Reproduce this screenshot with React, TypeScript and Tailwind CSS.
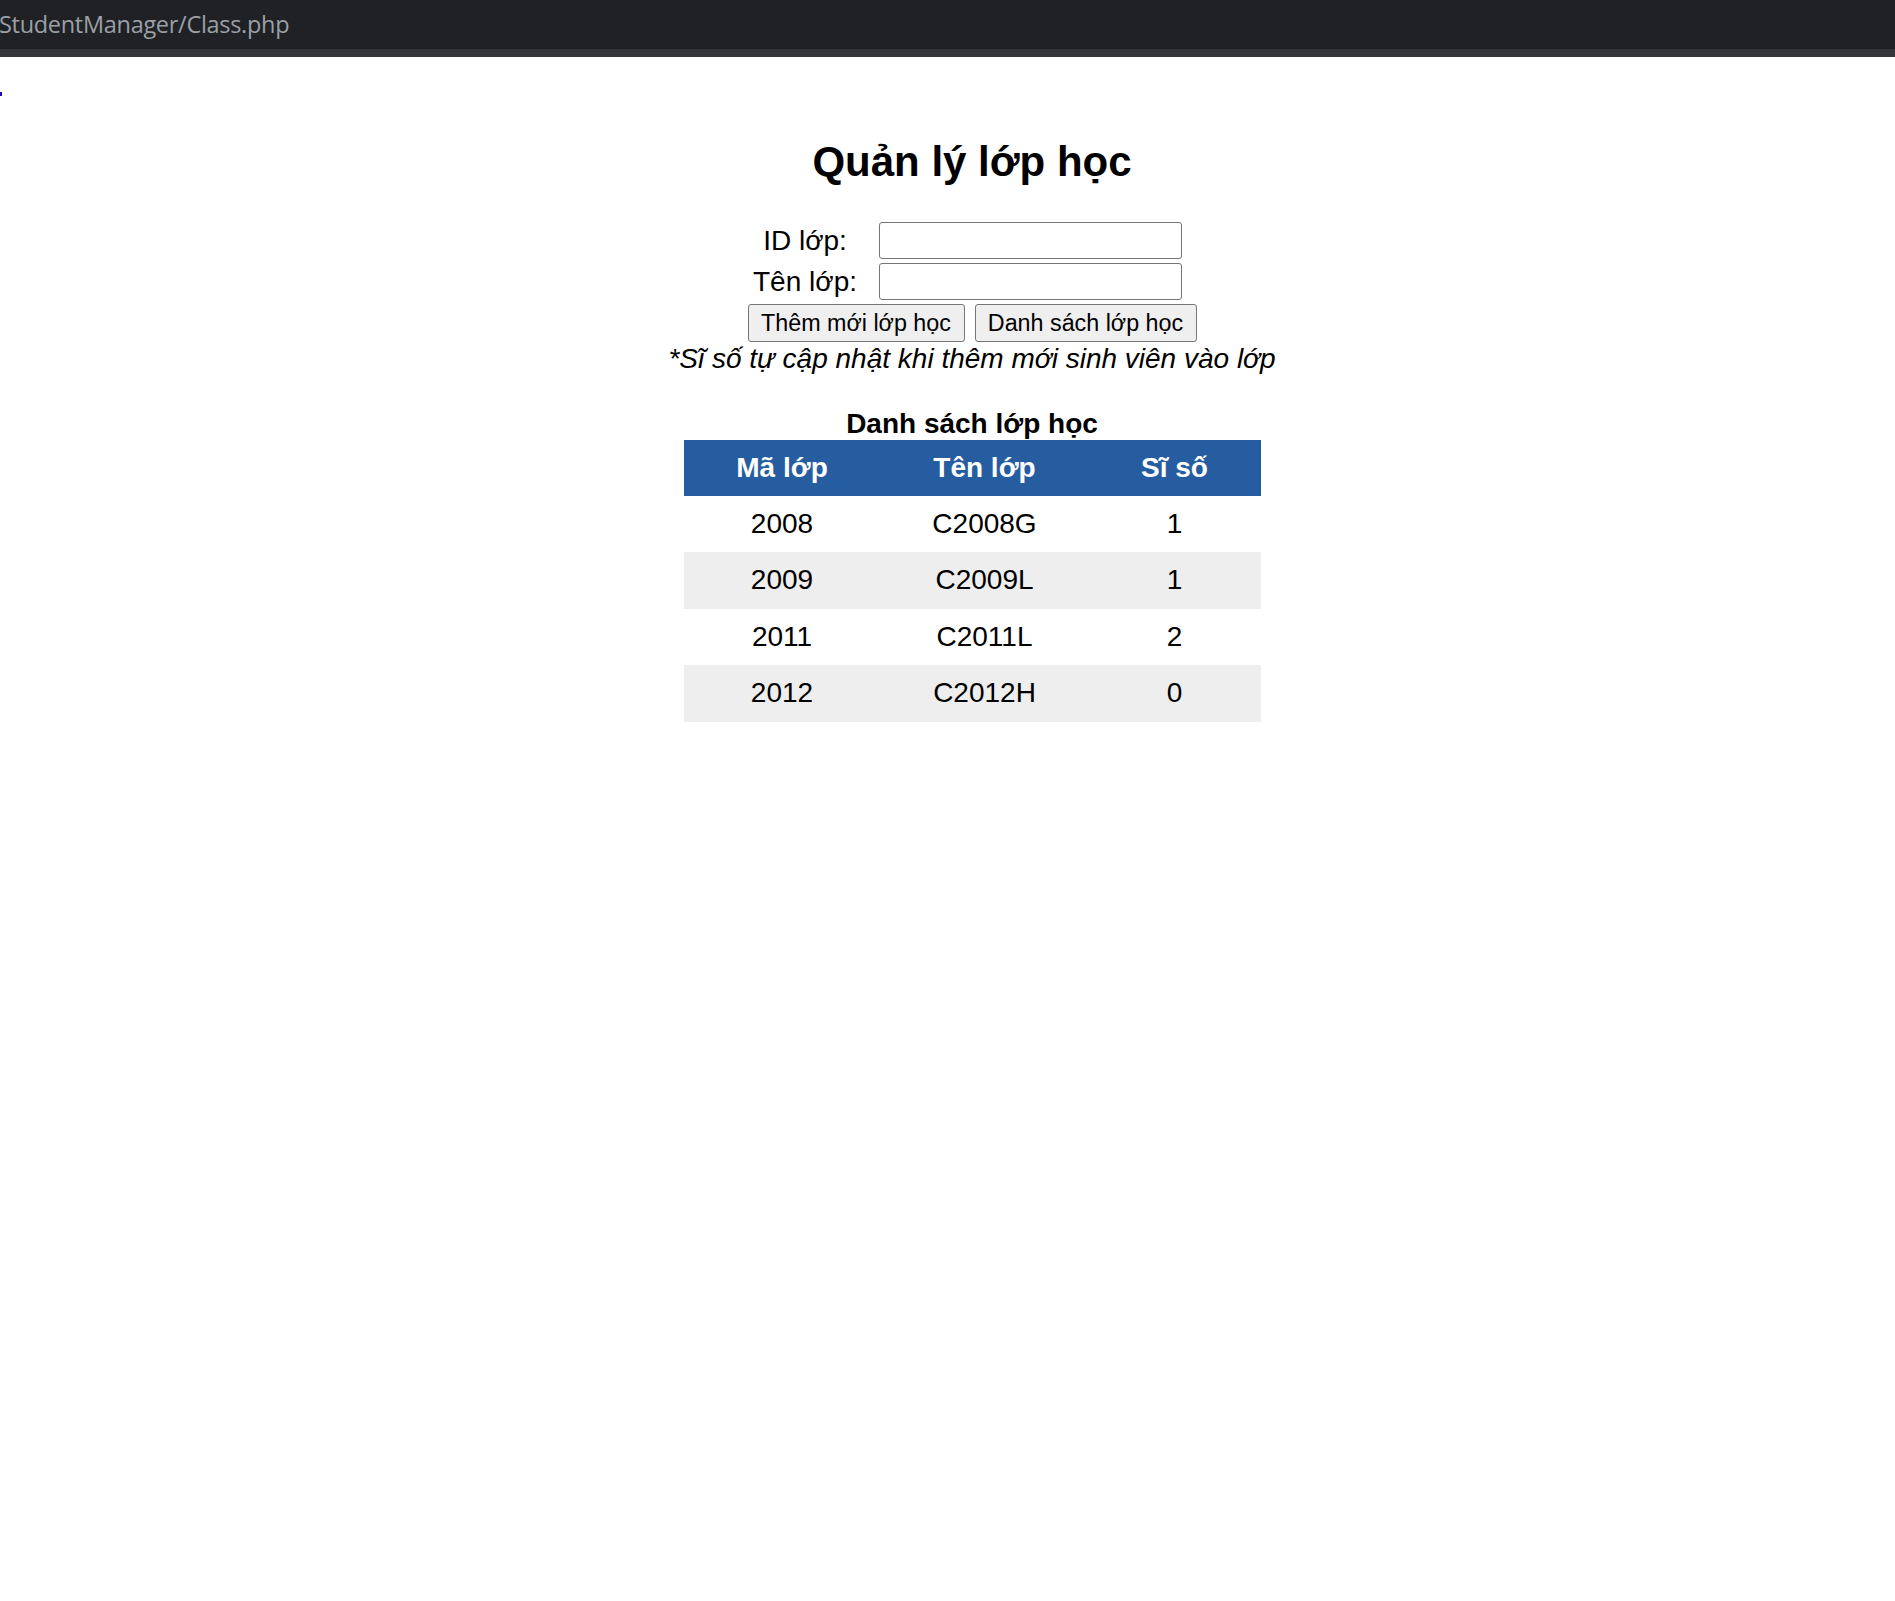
const classes = [
  { id: "2008", name: "C2008G", count: 1 },
  { id: "2009", name: "C2009L", count: 1 },
  { id: "2011", name: "C2011L", count: 2 },
  { id: "2012", name: "C2012H", count: 0 },
];

export default function App() {
  return (
    <div className="min-h-[1601px] bg-white font-['Liberation_Sans',Arial,sans-serif] text-black">
      {/* browser address strip */}
      <div className="h-[49px] bg-[#202124] overflow-hidden">
        <div className="ml-[-1px] pt-[7px] text-[23.5px] leading-[34px] text-[#9aa0a6] font-['Open_Sans','Noto_Sans',sans-serif] tracking-[-0.3px]">
          StudentManager/Class.php
        </div>
      </div>
      <div className="h-[8px] bg-[#35363a]" />

      <div className="pt-[35px]">
        <div className="w-[2px] h-[4px] bg-[#1a0dab]" />
      </div>

      <div className="pl-[49px] flex flex-col items-center">
        <h2 className="mt-[42px] text-[42px] leading-[48px] font-bold text-center">
          Quản lý lớp học
        </h2>

        <div className="mt-[36px] pr-[11px] grid grid-cols-[108px_303px] gap-x-[20px] gap-y-[4px] items-center text-[28px] leading-[32px]">
          <label className="text-center">ID lớp:</label>
          <input
            type="text"
            className="h-[37px] border-[1.75px] border-[#767676] rounded-[3px] bg-white"
          />
          <label className="text-center">Tên lớp:</label>
          <input
            type="text"
            className="h-[37px] border-[1.75px] border-[#767676] rounded-[3px] bg-white"
          />
        </div>

        <div className="mt-[4px] flex gap-[10px]">
          <button className="h-[37.5px] w-[217px] px-[10px] pt-[1px] text-[23.3px] leading-[27px] bg-[#efefef] border-[1.75px] border-[#767676] rounded-[3px]">
            Thêm mới lớp học
          </button>
          <button className="h-[37.5px] w-[222px] px-[10px] pt-[1px] text-[23.3px] leading-[27px] bg-[#efefef] border-[1.75px] border-[#767676] rounded-[3px]">
            Danh sách lớp học
          </button>
        </div>

        <p className="pt-[1px] text-[28px] leading-[32px] italic text-center">
          *Sĩ số tự cập nhật khi thêm mới sinh viên vào lớp
        </p>

        <div className="mt-[33px]">
          <div className="text-[28px] leading-[32px] font-bold text-center">
            Danh sách lớp học
          </div>
          <div className="grid grid-cols-[197px_208px_172px] text-[28px] leading-[32px] text-center">
            <div className="bg-[#255da0] text-white font-bold py-[12px]">Mã lớp</div>
            <div className="bg-[#255da0] text-white font-bold py-[12px]">Tên lớp</div>
            <div className="bg-[#255da0] text-white font-bold py-[12px]">Sĩ số</div>
            {classes.map((c, i) => (
              <div key={c.id} className="contents">
                <div className={i % 2 === 1 ? "bg-[#eeeeee] py-[12.25px]" : "py-[12.25px]"}>{c.id}</div>
                <div className={i % 2 === 1 ? "bg-[#eeeeee] py-[12.25px]" : "py-[12.25px]"}>{c.name}</div>
                <div className={i % 2 === 1 ? "bg-[#eeeeee] py-[12.25px]" : "py-[12.25px]"}>{c.count}</div>
              </div>
            ))}
          </div>
        </div>
      </div>
    </div>
  );
}
